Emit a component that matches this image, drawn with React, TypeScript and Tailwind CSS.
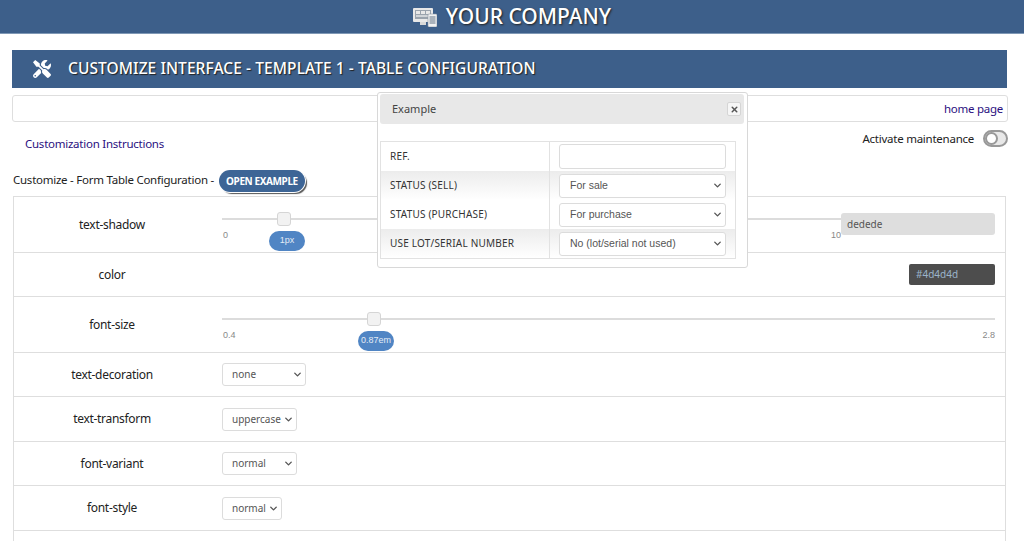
import { ChevronDown, X } from 'lucide-react';
import { FaTools } from 'react-icons/fa';

const font = "font-['Noto_Sans',sans-serif]";

function DevicesIcon() {
  return (
    <svg width="24" height="20" viewBox="0 0 24 20">
      <rect x="0" y="1" width="20" height="14" rx="1" fill="#e8e8e8" />
      <rect x="2" y="3" width="16" height="9" fill="#9aa3ad" />
      <rect x="3" y="4" width="4" height="3" fill="#e8e8e8" />
      <rect x="8" y="4" width="4" height="3" fill="#e8e8e8" />
      <rect x="13" y="4" width="4" height="3" fill="#e8e8e8" />
      <rect x="3" y="8" width="14" height="2" fill="#d0d4d8" />
      <rect x="7" y="15" width="6" height="3" fill="#d8d8d8" />
      <rect x="15" y="7" width="9" height="13" rx="1" fill="#f2f2f2" stroke="#8a95a3" strokeWidth="0.6" />
      <rect x="16.5" y="9" width="6" height="8" fill="#aab2bb" />
    </svg>
  );
}

function Select({ value, className }: { value: string; className: string }) {
  return (
    <div className={`relative flex items-center rounded-[3px] border border-[#dcdcdc] bg-white text-[#555] ${className}`}>
      <span>{value}</span>
      <ChevronDown size={11} strokeWidth={3} className="absolute right-[2px] top-[5px] text-[#555]" />
    </div>
  );
}

function Slider({ min, max, bubble, handle, bubbleLeft }: { min: string; max: string; bubble: string; handle: string; bubbleLeft: string }) {
  return (
    <div className="relative h-[40px] flex-1 font-['Liberation_Sans',sans-serif] text-[9px] text-[#888]">
      <div className="absolute left-0 right-0 top-[6px] h-[2px] bg-[#dcdcdc]" />
      <div className={`absolute top-0 h-[14px] w-[14px] rounded-[3px] border border-[#d5d5d5] bg-[#f2f2f2] ${handle}`} />
      <span className="absolute left-[1px] top-[17px]">{min}</span>
      <span className="absolute right-0 top-[17px]">{max}</span>
      <div className={`absolute top-[19px] flex h-[20px] w-[36px] items-center justify-center rounded-full bg-[#5085c4] text-[9px] text-[#e4ecf5] ${bubbleLeft}`}>
        {bubble}
      </div>
    </div>
  );
}

function Row({ label, height, children }: { label: string; height: string; children?: React.ReactNode }) {
  return (
    <div className={`flex items-center border-b border-[#dedede] ${height}`}>
      <div className="w-[196px] shrink-0 text-center text-[12px] leading-[16px] tracking-[-0.3px] text-[#222]">{label}</div>
      <div className="flex flex-1 items-center pl-[12px] pr-[10px]">{children}</div>
    </div>
  );
}

function ModalRow({ label, shaded, children }: { label: string; shaded?: boolean; children: React.ReactNode }) {
  return (
    <div className={`flex h-[29px] items-center ${shaded ? 'bg-gradient-to-b from-[#ececec] to-white' : ''}`}>
      <div className="flex h-full w-[169px] items-center border-r border-[#e2e2e2] pl-[9px] text-[10px] tracking-[0.2px] text-[#333]">{label}</div>
      <div className="pl-[9px]">{children}</div>
    </div>
  );
}

export default function App() {
  const modalSelect = "h-[24px] w-[167px] pl-[10px] font-['Liberation_Sans',sans-serif] text-[10.5px]";
  const tableSelect = 'h-[23px] pl-[9px] text-[10px]';
  return (
    <div className={`relative h-[541px] w-[1024px] overflow-hidden bg-white ${font}`}>
      <header className="flex h-[34px] items-center justify-center gap-[9px] border-b border-[#7f98b5] bg-[#3d5f8a] pt-[1px] text-[21px] font-medium text-white [text-shadow:1px_1px_2px_#222]">
        <DevicesIcon />
        <span>YOUR COMPANY</span>
      </header>

      <div className="pl-[12px] pr-[16px] pt-[16px]">
        <div className="mr-[1px] flex h-[38px] items-center gap-[17px] bg-[#3d5f8a] pb-[1px] pl-[21px] text-[15.5px] font-medium tracking-[0.08px] text-white [text-shadow:1px_1px_1px_#222]">
          <FaTools size={18} />
          <span>CUSTOMIZE INTERFACE - TEMPLATE 1 - TABLE CONFIGURATION</span>
        </div>

        <div className="mt-[7px] flex h-[27px] items-center justify-end rounded-[3px] border border-[#dedede] pr-[4px] text-[11.5px] tracking-[-0.25px] text-[#2a0f80]">
          home page
        </div>

        <div className="flex h-[44px] items-start justify-between text-[11.5px] leading-[16px] tracking-[-0.25px]">
          <span className="pl-[13px] pt-[14px] text-[#2a0f80]">Customization Instructions</span>
          <div className="flex items-center gap-[9px] pt-[8px] text-[#222]">
            <span>Activate maintenance</span>
            <div className="flex h-[17px] w-[25px] items-center rounded-full border-[2px] border-[#999] bg-[#e8e8e8]">
              <div className="h-[13px] w-[13px] rounded-full border-[2px] border-[#999] bg-white" />
            </div>
          </div>
        </div>

        <div className="flex h-[30px] items-center gap-[5px] pl-[1px] text-[11.5px] tracking-[-0.25px] text-[#222]">
          <span className="mb-[2px]">Customize - Form Table Configuration -</span>
          <div className="flex h-[22px] w-[86px] items-center justify-center rounded-full bg-[#3d6596] text-[10px] font-bold tracking-[-0.4px] text-white shadow-[0_0_0_1px_#fff,2px_2px_1px_#555]">OPEN EXAMPLE</div>
        </div>

        <div className="ml-[1px] mr-[2px] border-l border-r border-t border-[#dedede]">
          <Row label="text-shadow" height="h-[56px]">
            <div className="flex flex-1 items-start pt-[15px]">
              <Slider min="0" max="10" bubble="1px" handle="left-[55px]" bubbleLeft="left-[47px]" />
              <div className="mt-[1px] flex h-[22px] w-[154px] items-center rounded-[3px] bg-[#dedede] pl-[6px] text-[10px] text-[#555]">dedede</div>
            </div>
          </Row>
          <Row label="color" height="h-[44px]">
            <div className="ml-auto flex h-[21px] w-[86px] items-center rounded-[2px] bg-[#4d4d4d] pl-[7px] text-[10px] text-[#9bb4c9]">#4d4d4d</div>
          </Row>
          <Row label="font-size" height="h-[56px]">
            <div className="flex flex-1 items-start pt-[15px]">
              <Slider min="0.4" max="2.8" bubble="0.87em" handle="left-[145px]" bubbleLeft="left-[136px]" />
            </div>
          </Row>
          <Row label="text-decoration" height="h-[44px]"><Select value="none" className={`w-[84px] ${tableSelect}`} /></Row>
          <Row label="text-transform" height="h-[45px]"><Select value="uppercase" className={`w-[75px] ${tableSelect}`} /></Row>
          <Row label="font-variant" height="h-[44px]"><Select value="normal" className={`w-[75px] ${tableSelect}`} /></Row>
          <Row label="font-style" height="h-[45px]"><Select value="normal" className={`w-[60px] ${tableSelect}`} /></Row>
          <div className="h-[20px]" />
        </div>
      </div>

      <div className="absolute left-[377px] top-[92px] h-[176px] w-[371px] rounded-[3px] border border-[#d8d8d8] bg-white pl-[2px] pr-[3px] pt-[1px]">
        <div className="flex h-[30px] items-center justify-between rounded-[3px] bg-[#e8e8e8] pl-[12px] pr-[3px] text-[11px] text-[#444]">
          <span>Example</span>
          <div className="flex h-[14px] w-[14px] items-center justify-center rounded-[2px] border border-[#d5d5d5] bg-[#f6f6f6]">
            <X size={9} strokeWidth={4} className="text-[#555]" />
          </div>
        </div>
        <div className="mt-[17px] w-[356px] border-x border-y border-[#e2e2e2]">
          <ModalRow label="REF.">
            <div className="h-[25px] w-[167px] rounded-[3px] border border-[#dcdcdc] bg-white" />
          </ModalRow>
          <ModalRow label="STATUS (SELL)" shaded><Select value="For sale" className={modalSelect} /></ModalRow>
          <ModalRow label="STATUS (PURCHASE)"><Select value="For purchase" className={modalSelect} /></ModalRow>
          <ModalRow label="USE LOT/SERIAL NUMBER" shaded><Select value="No (lot/serial not used)" className={modalSelect} /></ModalRow>
        </div>
      </div>
    </div>
  );
}
